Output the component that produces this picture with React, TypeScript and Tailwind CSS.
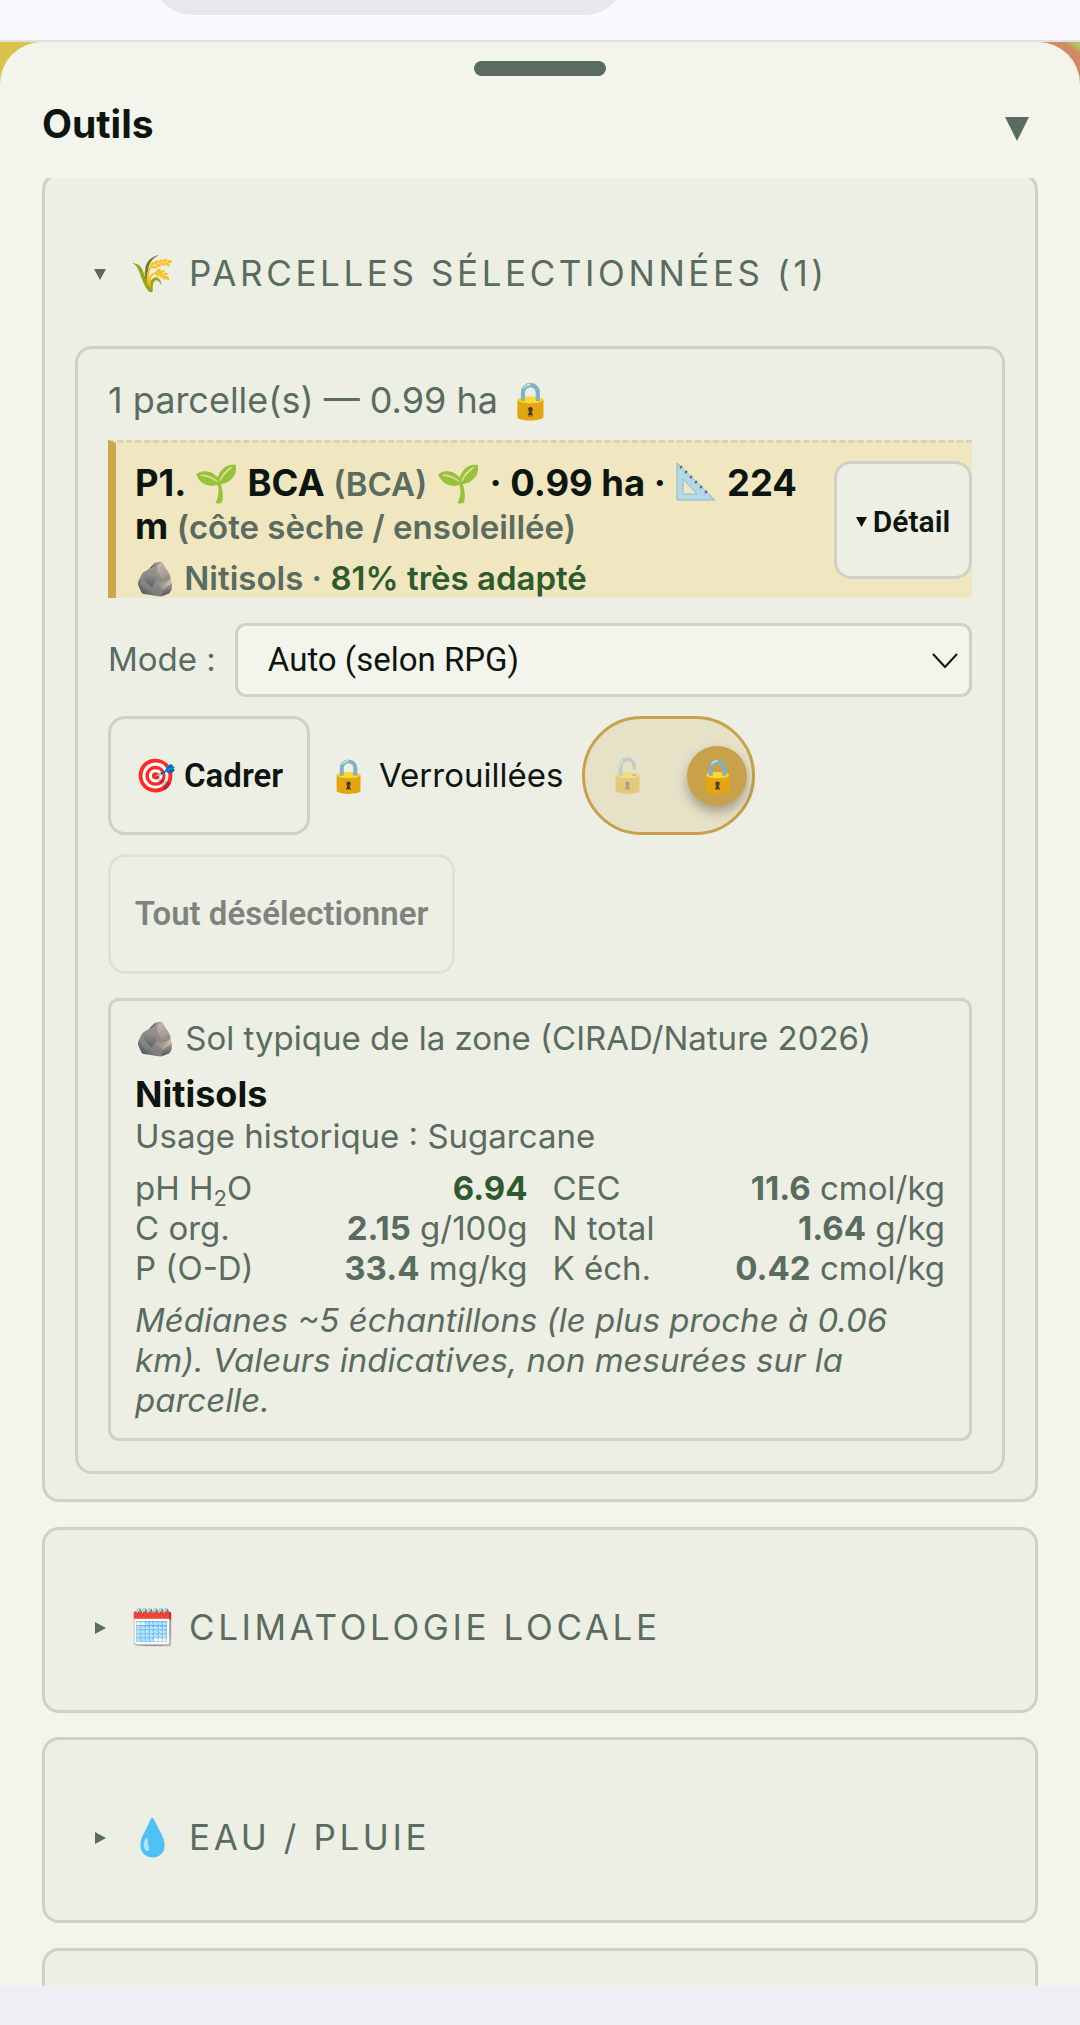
const Caret = ({ dir, className }: { dir: 'down' | 'right'; className?: string }) => (
  <svg width="12" height="12" viewBox="0 0 12 12" fill="currentColor" className={className}>
    <path d={dir === 'down' ? 'M0 1h12L6 12z' : 'M1 0l11 6-11 6z'} />
  </svg>
);

const Ruler = () => (
  <svg width="40" height="39" viewBox="0 0 40 39" className="mx-[2px] inline-block align-[-5px]">
    <path fillRule="evenodd" d="M1 1v37h38zM7 17v15h14z" fill="#b4d9e6" stroke="#8fb8c8" strokeWidth="1" />
    <path d="M6 4l-2 2M11 9l-2 2M16 14l-2 2M21 19l-2 2M26 24l-2 2M31 29l-2 2" stroke="#4f6f7c" strokeWidth="2" />
  </svg>
);

const Section = ({ icon, title }: { icon: string; title: string }) => (
  <div className="mt-[24.5px] flex h-[186px] shrink-0 items-start rounded-[17px] border-[3px] border-[#cfd1c8] bg-[#edefe5] pt-[75px] pl-[49px]">
    <Caret dir="right" className="mt-[17px] mr-[24px] text-[#5a6b5f]" />
    <span className="w-[59px] text-[36px] leading-[44px]">{icon}</span>
    <span className="text-[35px] leading-[44px] font-normal tracking-[3.6px] text-[#5a6b5f]">{title}</span>
  </div>
);

const SoilRow = ({ label, value, unit, green }: { label: React.ReactNode; value: string; unit?: string; green?: boolean }) => (
  <div className="flex justify-between">
    <span>{label}</span>
    <span>
      <b className={green ? 'font-bold text-[#2f5a2f]' : 'font-bold'}>{value}</b>
      {unit ? ` ${unit}` : ''}
    </span>
  </div>
);

export default function App() {
  return (
    <div className="relative flex h-[2025px] w-[1080px] flex-col overflow-hidden bg-[#eeeff4] font-['Inter',sans-serif] text-[#0d1510]">
      <div className="relative h-[42px] shrink-0 border-b-[2px] border-[#e0e0e6] bg-[#f9f9fe]">
        <div className="mx-auto -mt-[40px] ml-[152px] h-[55px] w-[473px] rounded-b-[40px] bg-[#e7e7ee]" />
      </div>
      <div className="absolute top-[42px] left-0 h-[60px] w-[40px] bg-[#dcc246]" />
      <div className="absolute top-[42px] right-0 h-[60px] w-[40px] bg-[linear-gradient(215deg,#a8c860_6%,#d28a62_14%)]" />

      <div className="relative flex h-[1944px] shrink-0 flex-col overflow-hidden rounded-t-[42px] bg-[#f3f5ec]">
        <div className="mx-auto mt-[19px] h-[15px] w-[132px] rounded-full bg-[#5a6b5f]" />
        <div className="flex h-[102px] shrink-0 items-center justify-between pr-[51px] pb-[5px] pl-[42px]">
          <h2 className="text-[39px] font-bold">Outils</h2>
          <svg width="24" height="24" viewBox="0 0 24 24" fill="#5a6b5f" className="mt-[9px]">
            <path d="M0 0h24L12 24z" />
          </svg>
        </div>

        <div className="flex flex-1 flex-col overflow-hidden px-[42px]">
          <div className="-mt-[5px] shrink-0 rounded-[17px] border-[3px] border-[#cfd1c8] bg-[#edefe5] px-[30px] pb-[25px]">
            <div className="flex h-[170px] items-start pt-[75px] pl-[19px]">
              <Caret dir="down" className="mt-[17px] mr-[24px] text-[#5a6b5f]" />
              <span className="w-[59px] text-[36px] leading-[44px]">🌾</span>
              <span className="text-[35px] leading-[44px] font-normal tracking-[3.6px] text-[#5a6b5f]">PARCELLES SÉLECTIONNÉES (1)</span>
            </div>

            <div className="rounded-[17px] border-[3px] border-[#cfd1c8] px-[30px] pt-[27px] pb-[30px]">
              <p className="text-[36px] leading-[48px] text-[#5a6b5f]">1 parcelle(s) — 0.99 ha 🔒</p>

              <div className="mt-[16px] flex h-[158px] items-start gap-[10px] overflow-hidden border-t-[3px] border-l-[8px] border-dashed border-t-[#d9d3b4] border-l-[#cfa54c] [border-left-style:solid] bg-[#f0e6c0] pl-[19px]">
                <div className="min-w-0 flex-1 pt-[19px]">
                  <p className="text-[36.4px] leading-[42px] font-bold">
                    P1. 🌱 BCA <span className="text-[33px] font-semibold text-[#5a6b5f]">(BCA)</span> 🌱 · 0.99 ha · <Ruler /> 224 m <span className="text-[33px] font-semibold text-[#5a6b5f]">(côte sèche / ensoleillée)</span>
                  </p>
                  <p className="mt-[8px] text-[33px] leading-[45px] font-semibold text-[#5a6b5f]">
                    🪨 Nitisols · <span className="text-[#2f5a2f]">81% très adapté</span>
                  </p>
                </div>
                <button className="mt-[18px] flex h-[118px] w-[138px] shrink-0 items-center justify-center gap-[6px] rounded-[17px] border-[3px] border-[#cfd1c8] bg-[#edefe5] pt-[2px] font-['Roboto',sans-serif] text-[30px] font-semibold">
                  <Caret dir="down" className="h-[11px] w-[11px]" /> Détail
                </button>
              </div>

              <div className="mt-[25px] flex items-center gap-[19px]">
                <span className="text-[33px] text-[#5a6b5f]">Mode :</span>
                <div className="flex h-[74px] flex-1 items-center justify-between rounded-[11px] border-[3px] border-[#cfd1c8] bg-[#f3f5ec] pr-[10px] pl-[30px] font-['Roboto',sans-serif] text-[33px]">
                  Auto (selon RPG)
                  <svg width="28" height="20" viewBox="0 0 28 20" fill="none" stroke="#0d1510" strokeWidth="2">
                    <path d="M2 4l12 13L26 4" />
                  </svg>
                </div>
              </div>

              <div className="mt-[19px] flex items-center">
                <button className="h-[119px] w-[202px] rounded-[17px] border-[3px] border-[#cfd1c8] font-['Roboto',sans-serif] text-[33px] font-semibold">🎯 Cadrer</button>
                <span className="ml-[18px] text-[33px]">🔒</span>
                <span className="ml-[10px] text-[33px]">Verrouillées</span>
                <div className="ml-[19px] flex h-[119px] w-[173px] items-center justify-between rounded-full border-[3px] border-[#c9a14a] bg-[#e6e2c8] pr-[5px] pl-[22px]">
                  <span className="text-[33px] opacity-40">🔓</span>
                  <span className="flex h-[60px] w-[60px] items-center justify-center rounded-full bg-[#c9a14a] text-[33px] shadow-[0_6px_12px_rgba(0,0,0,0.3)]">🔒</span>
                </div>
              </div>

              <button className="mt-[19px] block h-[120px] w-[347px] rounded-[17px] border-[3px] border-[#dfe0d7] font-['Roboto',sans-serif] text-[33px] font-semibold text-[#7e837e]">Tout désélectionner</button>

              <div className="mt-[24px] rounded-[11px] border-[3px] border-[#cfd1c8] px-[24px] pt-[17px] pb-[18px] text-[33px] leading-[40px] text-[#5a6b5f]">
                <p>🪨 Sol typique de la zone (CIRAD/Nature 2026)</p>
                <p className="mt-[14px] text-[36px] leading-[44px] font-bold text-[#0d1510]">Nitisols</p>
                <p>Usage historique : Sugarcane</p>
                <div className="mt-[12px] grid grid-cols-2 gap-x-[25px]">
                  <SoilRow label={<>pH H<sub className="text-[22px]">2</sub>O</>} value="6.94" green />
                  <SoilRow label="CEC" value="11.6" unit="cmol/kg" />
                  <SoilRow label="C org." value="2.15" unit="g/100g" />
                  <SoilRow label="N total" value="1.64" unit="g/kg" />
                  <SoilRow label="P (O-D)" value="33.4" unit="mg/kg" />
                  <SoilRow label="K éch." value="0.42" unit="cmol/kg" />
                </div>
                <p className="mt-[12px] italic">Médianes ~5 échantillons (le plus proche à 0.06 km). Valeurs indicatives, non mesurées sur la parcelle.</p>
              </div>
            </div>
          </div>

          <Section icon="🗓️" title="CLIMATOLOGIE LOCALE" />
          <Section icon="💧" title="EAU / PLUIE" />
          <div className="mt-[24.5px] h-[186px] shrink-0 rounded-[17px] border-[3px] border-[#cfd1c8] bg-[#edefe5]" />
        </div>
      </div>
    </div>
  );
}
